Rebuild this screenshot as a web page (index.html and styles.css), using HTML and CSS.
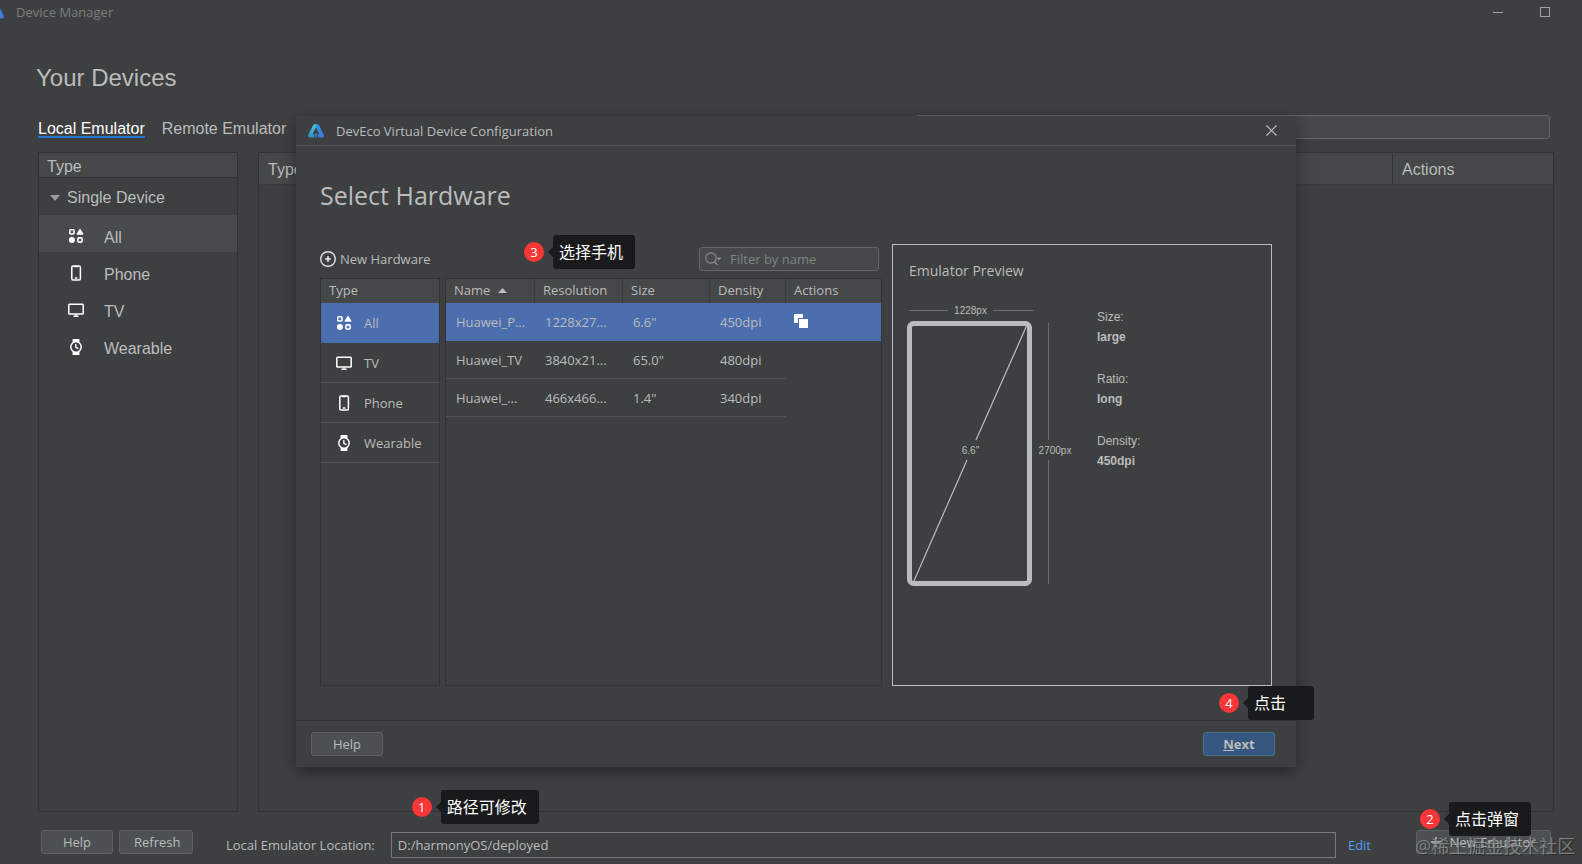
FILE: index.html
```html
<!DOCTYPE html>
<html lang="en">
<head>
<meta charset="utf-8">
<title>Device Manager</title>
<link rel="stylesheet" href="styles.css">
</head>
<body>
<svg class="sprite" aria-hidden="true">
  <symbol id="i-all" viewBox="0 0 16 16">
    <rect x="1.800" y="1.800" width="4.200" height="4.200" rx="1" fill="none" stroke="currentColor" stroke-width="1.600"/>
    <path d="M12 .6 15.200 5.400Q15.600 6.800 14.400 6.800H9.600Q8.400 6.800 8.800 5.400Z" fill="currentColor"/>
    <circle cx="3.900" cy="12" r="3" fill="currentColor"/>
    <rect x="9.900" y="9.900" width="4.200" height="4.200" rx="1" fill="none" stroke="currentColor" stroke-width="1.600"/>
  </symbol>
  <symbol id="i-phone" viewBox="0 0 16 16">
    <rect x="3.800" y="1" width="8.600" height="14" rx="1.200" fill="none" stroke="currentColor" stroke-width="1.500"/>
    <path d="M6 1.500h4M6.800 13h2.600" stroke="currentColor" stroke-width="1.300" fill="none"/>
  </symbol>
  <symbol id="i-tv" viewBox="0 0 16 16">
    <rect x=".8" y="2.200" width="14.400" height="9.800" rx=".8" fill="none" stroke="currentColor" stroke-width="1.500"/>
    <path d="M8 12v1.800M5.500 14.200h5" stroke="currentColor" stroke-width="1.400" fill="none"/>
  </symbol>
  <symbol id="i-watch" viewBox="0 0 16 16">
    <path d="M4.600 0h6.800v3.400H4.600ZM4.600 12.600h6.800V16H4.600Z" fill="currentColor"/>
    <circle cx="8" cy="8" r="5.200" fill="#3d3f40" stroke="currentColor" stroke-width="1.500"/>
    <path d="M7.800 5v3.300l2.600 1.400" fill="none" stroke="currentColor" stroke-width="1.400"/>
  </symbol>
  <symbol id="i-logo" viewBox="0 0 16 14">
    <path d="M9.600 0 5 9.200Q4.400 10.600 6.400 10.600V13.600H2.400Q-.8 13.600 .4 10.600L5 1.600Q5.800 0 7 0Z" fill="url(#logo-a)"/>
    <path d="M7 0H9.200Q10.400 0 11.200 1.600L15.600 10.600Q16.800 13.600 13.600 13.600H9.800V10.600Q11.600 10.600 11 9.200L7.800 3.200Z" fill="url(#logo-b)"/>
    <path d="M8 8.400 9.800 11H8.800V13.400H7.400V11H6.400Z" fill="#3c7fc8"/>
  </symbol>
  <linearGradient id="logo-a" x1="0" y1="0" x2="0" y2="1"><stop offset="0" stop-color="#56c9e0"/><stop offset="1" stop-color="#2490c6"/></linearGradient>
  <linearGradient id="logo-b" x1="0" y1="0" x2="0" y2="1"><stop offset="0" stop-color="#1b9fe0"/><stop offset="1" stop-color="#4a72dc"/></linearGradient>
</svg>

<header class="titlebar">
  <svg class="titlebar-logo" viewBox="0 0 16 14"><use href="#i-logo"/></svg>
  <span class="titlebar-text">Device Manager</span>
  <button class="win-btn" aria-label="Minimize"><svg width="10" height="10" viewBox="0 0 10 10"><path d="M0 5.500h10" stroke="currentColor"/></svg></button>
  <button class="win-btn" aria-label="Maximize"><svg width="10" height="10" viewBox="0 0 10 10"><rect x=".5" y=".5" width="9" height="9" fill="none" stroke="currentColor"/></svg></button>
</header>

<main class="page">
  <h1 class="page-title">Your Devices</h1>
  <div class="toolbar">
    <nav class="tabs">
      <a class="tab tab-active" href="#local">Local Emulator</a>
      <a class="tab" href="#remote">Remote Emulator</a>
    </nav>
    <input class="device-search" type="text" aria-label="Search devices">
  </div>
  <div class="panels">
    <aside class="sidebar">
      <div class="sidebar-head">Type</div>
      <button class="tree-root"><svg width="10" height="6" viewBox="0 0 10 6"><path d="M0 0h10L5 6Z" fill="currentColor"/></svg>Single Device</button>
      <button class="tree-item tree-item-active"><svg class="icon"><use href="#i-all"/></svg><span class="tree-label">All</span></button>
      <button class="tree-item"><svg class="icon"><use href="#i-phone"/></svg><span class="tree-label">Phone</span></button>
      <button class="tree-item"><svg class="icon"><use href="#i-tv"/></svg><span class="tree-label">TV</span></button>
      <button class="tree-item"><svg class="icon"><use href="#i-watch"/></svg><span class="tree-label">Wearable</span></button>
    </aside>
    <section class="devices">
      <table class="devices-table">
        <thead><tr><th>Type</th><th class="devices-actions">Actions</th></tr></thead>
      </table>
    </section>
  </div>
</main>

<footer class="bottombar">
  <button class="btn">Help</button>
  <button class="btn btn-refresh">Refresh</button>
  <label class="location-label" for="location">Local Emulator Location:</label>
  <div class="location">
    <input class="location-input" id="location" type="text" value="D:/harmonyOS/deployed">
    <div class="callout callout-path"><span class="badge">1</span><span class="tip">路径可修改</span></div>
  </div>
  <a class="edit" href="#edit">Edit</a>
  <div class="new-emulator">
    <button class="btn btn-new"><svg width="10" height="10" viewBox="0 0 10 10"><path d="M5 0v10M0 5h10" stroke="currentColor" stroke-width="1.500"/></svg>New Emulator</button>
    <div class="callout callout-new"><span class="badge">2</span><span class="tip">点击弹窗</span></div>
    <div class="watermark">@稀土掘金技术社区</div>
  </div>
</footer>

<div class="dialog" role="dialog" aria-labelledby="dialog-title">
  <header class="dialog-bar">
    <svg class="dialog-logo" viewBox="0 0 16 14"><use href="#i-logo"/></svg>
    <span id="dialog-title">DevEco Virtual Device Configuration</span>
    <button class="dialog-close" aria-label="Close"><svg width="11" height="11" viewBox="0 0 11 11"><path d="M.5 .5l10 10M10.500 .5l-10 10" stroke="currentColor" stroke-width="1.200"/></svg></button>
  </header>
  <div class="dialog-body">
    <h2 class="dialog-heading">Select Hardware</h2>
    <div class="dialog-main">
      <div class="hardware">
        <div class="hardware-tools">
          <button class="new-hardware"><svg width="16" height="16" viewBox="0 0 16 16"><circle cx="8" cy="8" r="7.300" fill="none" stroke="currentColor" stroke-width="1.400"/><path d="M8 5v6M5 8h6" stroke="currentColor" stroke-width="1.600"/></svg>New Hardware</button>
          <div class="filter">
            <svg class="filter-icon" width="17" height="14" viewBox="0 0 17 14"><circle cx="6" cy="6" r="5.200" fill="none" stroke="currentColor" stroke-width="1.200"/><path d="M9.500 9.500l3 3.500" stroke="currentColor" stroke-width="1.400"/><path d="M11.500 5.500h5L14 8.500Z" fill="currentColor"/></svg>
            <input class="filter-input" type="text" placeholder="Filter by name" aria-label="Filter by name">
          </div>
          <div class="callout callout-select"><span class="badge">3</span><span class="tip">选择手机</span></div>
        </div>
        <div class="hardware-panels">
          <div class="types">
            <div class="types-head">Type</div>
            <button class="type type-active"><svg class="icon"><use href="#i-all"/></svg>All</button>
            <button class="type"><svg class="icon"><use href="#i-tv"/></svg>TV</button>
            <button class="type"><svg class="icon"><use href="#i-phone"/></svg>Phone</button>
            <button class="type"><svg class="icon"><use href="#i-watch"/></svg>Wearable</button>
          </div>
          <div class="models">
            <table class="models-table">
              <colgroup><col class="col-name"><col class="col-res"><col class="col-size"><col class="col-density"><col></colgroup>
              <thead><tr><th>Name<svg class="sort" width="9" height="5" viewBox="0 0 9 5"><path d="M0 5h9L4.500 0Z" fill="currentColor"/></svg></th><th>Resolution</th><th>Size</th><th>Density</th><th>Actions</th></tr></thead>
              <tbody>
                <tr class="row-active"><td>Huawei_P...</td><td>1228x27...</td><td>6.6"</td><td>450dpi</td><td class="cell-action"><button class="copy" aria-label="Copy"><svg width="14" height="14" viewBox="0 0 14 14"><path d="M0 0h9v4H4v5H0Z" fill="currentColor"/><rect x="5" y="5" width="9" height="9" fill="currentColor"/></svg></button></td></tr>
                <tr><td>Huawei_TV</td><td>3840x21...</td><td>65.0"</td><td>480dpi</td><td class="cell-action"></td></tr>
                <tr><td>Huawei_...</td><td>466x466...</td><td>1.4"</td><td>340dpi</td><td class="cell-action"></td></tr>
              </tbody>
            </table>
          </div>
        </div>
      </div>
      <section class="preview">
        <h3 class="preview-title">Emulator Preview</h3>
        <div class="preview-body">
          <svg class="drawing" width="168" height="290" viewBox="0 0 168 290">
            <path d="M2 10.500h39M86 10.500h41M141.500 23v117M141.500 160v124" stroke="#6b6d6e"/>
            <rect x="2.500" y="23.500" width="120" height="260" rx="4" fill="none" stroke="#bbbcbd" stroke-width="5"/>
            <path d="M119.500 26 69 140M60 160 6.500 282" stroke="#bbbcbd" stroke-width="1.200"/>
            <text class="dim" x="63.500" y="14">1228px</text>
            <text class="dim" x="63.500" y="154">6.6"</text>
            <text class="dim" x="148" y="154">2700px</text>
          </svg>
          <dl class="specs">
            <dt>Size:</dt><dd>large</dd>
            <dt>Ratio:</dt><dd>long</dd>
            <dt>Density:</dt><dd>450dpi</dd>
          </dl>
        </div>
      </section>
    </div>
  </div>
  <footer class="dialog-foot">
    <button class="btn">Help</button>
    <button class="btn btn-primary"><u>N</u>ext</button>
    <div class="callout callout-next"><span class="badge">4</span><span class="tip tip-wide">点击</span></div>
  </footer>
</div>
</body>
</html>
```
FILE: styles.css
```css
* { box-sizing: border-box; }

:root {
  --bg: #3d3f40;
  --head: #454748;
  --line: #313334;
  --rule: #515354;
  --text: #bbbcbd;
  --blue: #4b6eaf;
  --ui: "Open Sans", "Noto Sans CJK SC", sans-serif;
  --arial: "Liberation Sans", sans-serif;
}

body {
  margin: 0;
  min-height: 100vh;
  display: flex;
  flex-direction: column;
  position: relative;
  overflow: hidden;
  background: var(--bg);
  color: var(--text);
  font: 13px/18px var(--ui);
}

button, input { font: inherit; color: inherit; }
button { background: none; border: 0; padding: 0; text-align: left; }
h1, h2, h3, dl, dd { margin: 0; font-weight: 400; }
a { color: inherit; text-decoration: none; }
th { font-weight: 400; text-align: left; }
table { border-collapse: separate; border-spacing: 0; table-layout: fixed; width: 100%; }
th, td { vertical-align: middle; }

.sprite { position: absolute; width: 0; height: 0; }
.icon { width: 16px; height: 16px; color: #fff; flex: none; }

.titlebar { display: flex; align-items: center; height: 24px; padding-right: 32px; color: #7c7e7f; }
.titlebar-logo { width: 16px; height: 14px; margin-left: -12px; margin-right: 12px; }
.titlebar-text { flex: 1; }
.win-btn { display: flex; width: 10px; margin-left: 37px; color: #a0a2a3; }

.page { flex: 1; display: flex; flex-direction: column; padding: 40px 28px 0 38px; font: 16px/18px var(--arial); }
.page-title { font: 24px/28px var(--arial); margin-left: -2px; }
.toolbar { display: flex; justify-content: space-between; align-items: flex-start; margin-top: 23px; padding-right: 4px; }
.tabs { display: flex; gap: 17px; padding-top: 5px; }
.tab { line-height: 18px; height: 18px; border-bottom: 2px solid transparent; }
.tab-active { color: #fff; border-color: #2675d0; }
.device-search { width: 42%; height: 24px; background: #45494a; border: 1px solid #646667; border-radius: 3px; }
.panels { flex: 1; display: flex; gap: 20px; margin-top: 13px; }

.sidebar { width: 200px; border: 1px solid var(--line); display: flex; flex-direction: column; }
.sidebar-head { height: 25px; padding: 5px 8px 0; background: var(--head); border-bottom: 1px solid var(--line); }
.tree-root { display: flex; align-items: center; gap: 7px; height: 37px; padding: 2px 0 0 11px; color: var(--text); }
.tree-root svg { color: #9a9c9d; }
.tree-item { display: flex; align-items: center; gap: 20px; height: 37px; padding: 4px 0 0 29px; }
.tree-item-active { background: #474b4d; }
.tree-label { padding-top: 4px; }

.devices { flex: 1; border: 1px solid var(--line); }
.devices-table th { height: 32px; padding: 2px 9px 0; background: var(--head); border-bottom: 1px solid #393b3c; }
.devices-table .devices-actions { width: 161px; border-left: 1px solid var(--line); }

.btn { min-width: 72px; height: 24px; padding: 0 14px; text-align: center; background: #4c5052; border: 1px solid #5e6061; border-radius: 3px; line-height: 20px; }
.btn-primary { background: #365880; border-color: #4c708c; font-weight: 700; }

.bottombar { display: flex; align-items: flex-start; padding: 18px 31px 6px 41px; }
.btn-refresh { width: 74px; margin-left: 6px; }
.location-label { margin: 6px 16px 0 33px; }
.location { position: relative; flex: 1; margin-top: 2px; display: flex; }
.location-input { width: 100%; height: 26px; padding: 0 6px; background: transparent; border: 1px solid #77797a; }
.edit { margin: 6px 45px 0 12px; color: #589df6; }
.new-emulator { position: relative; }
.btn-new { width: 135px; white-space: nowrap; display: flex; align-items: center; justify-content: center; gap: 8px; }
.watermark { position: absolute; left: -1px; top: 3px; white-space: nowrap; font: 18px/26px var(--ui); color: rgba(170, 172, 173, .6); text-shadow: 1px 1px 1px rgba(0, 0, 0, .4); z-index: 3; }

.callout { position: absolute; display: flex; align-items: center; gap: 9px; z-index: 2; }
.badge { width: 20px; height: 20px; border-radius: 50%; background: #fb3636; color: #fff; text-align: center; font: 13px/20px var(--ui); }
.tip { position: relative; height: 34px; padding: 0 12px 0 6px; border-radius: 3px; background: #191a1b; color: #fff; font: 16px/32px "Noto Sans CJK SC", sans-serif; white-space: nowrap; }
.tip::before { content: ""; position: absolute; left: -5px; top: 12px; border: 5px solid transparent; border-left: 0; border-right-color: #191a1b; }
.tip-wide { padding-right: 28px; }
.callout-path { left: 21px; top: -42px; }
.callout-new { left: 4px; top: -28px; }
.callout-select { left: 204px; top: -12px; }
.callout-next { right: -18px; top: -35px; }

.dialog { position: absolute; inset: 116px 286px 97px 296px; display: flex; flex-direction: column; background: var(--bg); box-shadow: 0 5px 14px rgba(0, 0, 0, .4); }
.dialog-bar { display: flex; align-items: center; height: 30px; padding: 0 19px 0 12px; border-bottom: 1px solid var(--rule); }
.dialog-logo { width: 16px; height: 14px; margin-right: 12px; }
.dialog-close { display: flex; margin-left: auto; }
.dialog-body { flex: 1; display: flex; flex-direction: column; padding: 32px 24px 0; }
.dialog-heading { font: 25px/34px var(--ui); }
.dialog-main { flex: 1; display: flex; gap: 10px; padding-top: 32px; }
.hardware { flex: 1; display: flex; flex-direction: column; padding-top: 3px; }
.hardware-tools { position: relative; display: flex; justify-content: space-between; height: 24px; padding-right: 3px; }
.new-hardware { display: flex; align-items: center; gap: 4px; }
.new-hardware svg { color: #e4e5e5; }
.filter { display: flex; align-items: center; width: 180px; padding-left: 5px; gap: 8px; border: 1px solid #646667; border-radius: 3px; background: #45494a; color: #8a8c8d; }
.filter-icon { flex: none; }
.filter-input { width: 100%; min-width: 0; border: 0; padding: 0; background: transparent; }
.filter-input::placeholder { color: #808283; }
.hardware-panels { flex: 1; display: flex; gap: 5px; margin-top: 7px; }
.types { width: 120px; border: 1px solid var(--line); display: flex; flex-direction: column; }
.types-head { height: 24px; padding: 2px 8px; background: var(--head); }
.type { display: flex; align-items: center; gap: 12px; height: 40px; padding-left: 15px; border-bottom: 1px solid var(--rule); }
.type-active, .row-active { background: var(--blue); }
.type-active { border-bottom-color: var(--blue); }
.models { flex: 1; border: 1px solid var(--line); }
.models-table th { height: 24px; padding: 0 8px 2px; background: var(--head); border-right: 1px solid #393b3c; }
.models-table th:last-child { border-right: 0; }
.models-table td { height: 38px; padding: 0 10px; border-bottom: 1px solid var(--rule); white-space: nowrap; }
.models-table td.cell-action { border-bottom-color: transparent; padding: 0 8px 2px; }
.models-table .row-active td { border-bottom-color: transparent; }
.sort { margin-left: 8px; vertical-align: 2px; }
.col-name { width: 89px; }
.col-res { width: 88px; }
.col-size { width: 87px; }
.col-density { width: 76px; }
.copy { display: flex; color: #fff; }

.preview { width: 380px; padding: 17px 14px; border: 1px solid var(--text); }
.preview-title { font: 14px/18px var(--ui); margin-left: 2px; }
.preview-body { display: flex; gap: 22px; margin-top: 20px; }
.drawing { flex: none; }
.dim { font: 10px var(--arial); fill: var(--text); text-anchor: middle; }
.specs { font: 12px/20px var(--arial); padding-top: 7px; }
.specs dd { font-weight: 700; margin-bottom: 22px; }

.dialog-foot { position: relative; display: flex; justify-content: space-between; margin-top: 34px; padding: 11px 21px 11px 15px; border-top: 1px solid var(--line); }
```
